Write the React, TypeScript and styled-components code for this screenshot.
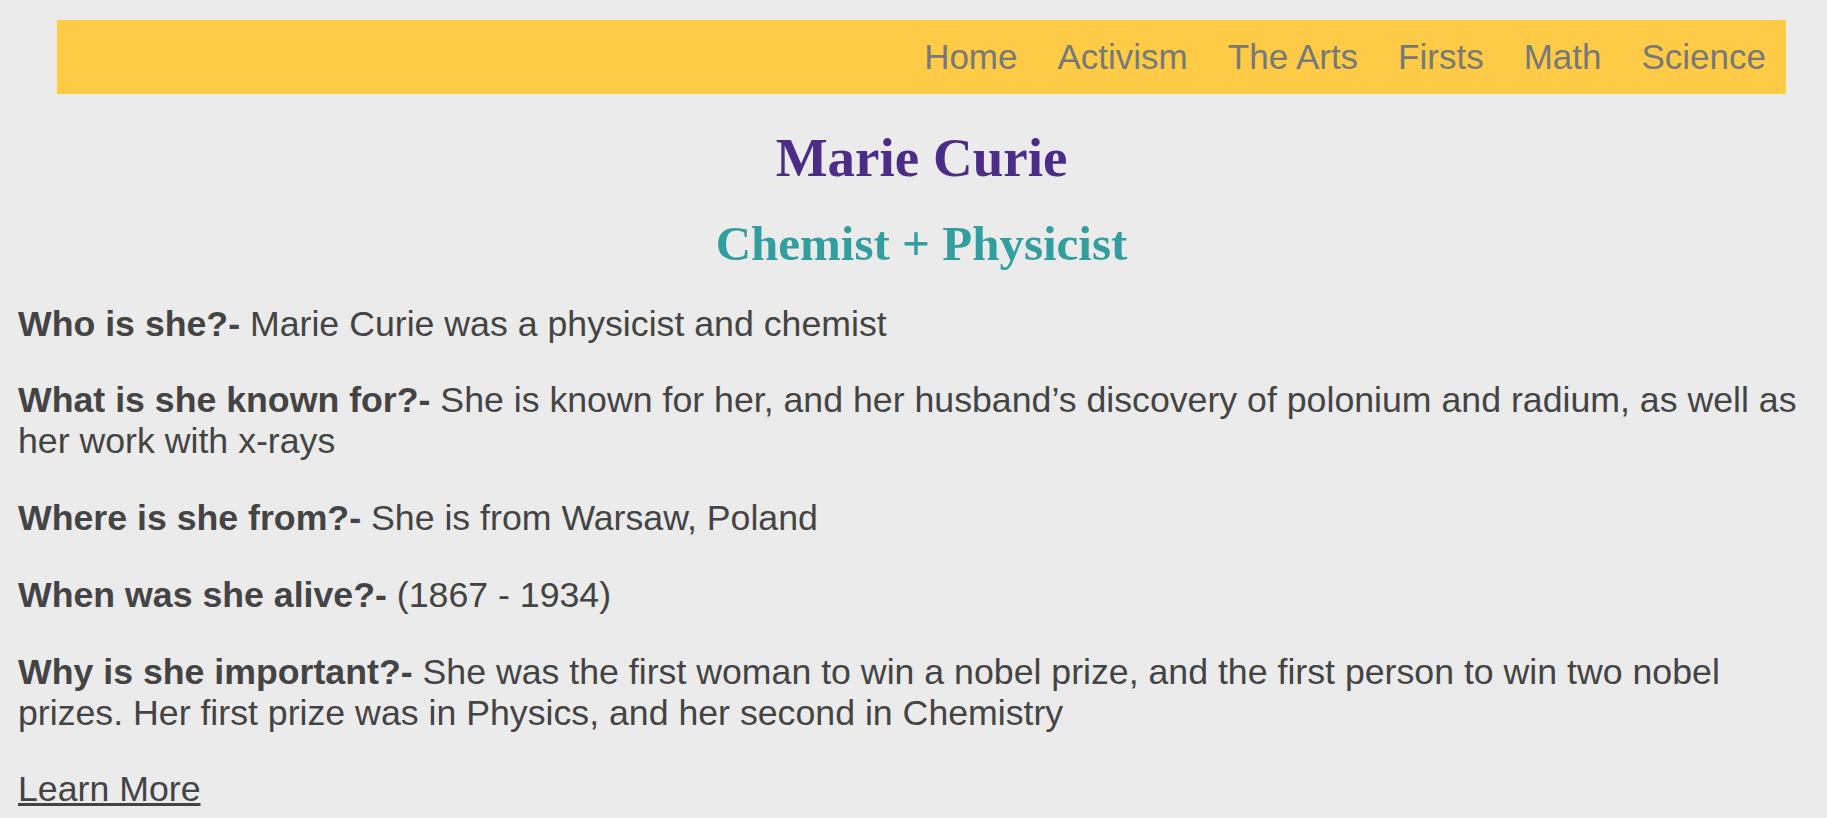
import React from 'react';
import styled, { createGlobalStyle } from 'styled-components';

const GlobalStyle = createGlobalStyle`
  html, body {
    margin: 0;
    padding: 0;
    background: #ebebeb;
  }
`;

const Page = styled.div`
  box-sizing: border-box;
  color: #444;
  font-family: "Liberation Sans", Arial, sans-serif;
  padding: 20px 2px 0 18px;
  width: 100%;
`;

const NavBar = styled.nav`
  align-items: center;
  background-color: #fdcb45;
  display: flex;
  gap: 40px;
  height: 74px;
  justify-content: flex-end;
  margin: 0 39px;
  padding: 0 20px;
`;

const NavLink = styled.a`
  color: #787878;
  font-size: 35px;
  line-height: 40px;
  text-decoration: none;
`;

const Title = styled.h1`
  color: #4b2d87;
  font-family: "Liberation Serif", Georgia, serif;
  font-size: 55px;
  font-weight: 700;
  line-height: 63px;
  margin: 32px 0 0;
  text-align: center;
`;

const Subtitle = styled.h2`
  color: #329e9e;
  font-family: "Liberation Serif", Georgia, serif;
  font-size: 49px;
  font-weight: 700;
  line-height: 56px;
  margin: 26.5px 0 0;
  text-align: center;
`;

const Facts = styled.div`
  display: flex;
  flex-direction: column;
  gap: 35.8px;
  margin-top: 32px;
`;

const Fact = styled.p`
  font-size: 35.7px;
  line-height: 41px;
  margin: 0;

  strong {
    font-weight: 700;
  }
`;

const MoreLink = styled.a`
  color: #444;
  text-decoration: underline;
`;

const facts = [
  { q: 'Who is she?-', a: 'Marie Curie was a physicist and chemist' },
  {
    q: 'What is she known for?-',
    a: 'She is known for her, and her husband\u2019s discovery of polonium and radium, as well as her work with x-rays',
  },
  { q: 'Where is she from?-', a: 'She is from Warsaw, Poland' },
  { q: 'When was she alive?-', a: '(1867 - 1934)' },
  {
    q: 'Why is she important?-',
    a: 'She was the first woman to win a nobel prize, and the first person to win two nobel prizes. Her first prize was in Physics, and her second in Chemistry',
  },
];

const navItems = ['Home', 'Activism', 'The Arts', 'Firsts', 'Math', 'Science'];

export default function App() {
  return (
    <>
      <GlobalStyle />
      <Page>
        <NavBar>
          {navItems.map((item) => (
            <NavLink key={item} href="#">
              {item}
            </NavLink>
          ))}
        </NavBar>
        <Title>Marie Curie</Title>
        <Subtitle>Chemist + Physicist</Subtitle>
        <Facts>
          {facts.map((f) => (
            <Fact key={f.q}>
              <strong>{f.q}</strong> {f.a}
            </Fact>
          ))}
          <Fact>
            <MoreLink href="#">Learn More</MoreLink>
          </Fact>
        </Facts>
      </Page>
    </>
  );
}
